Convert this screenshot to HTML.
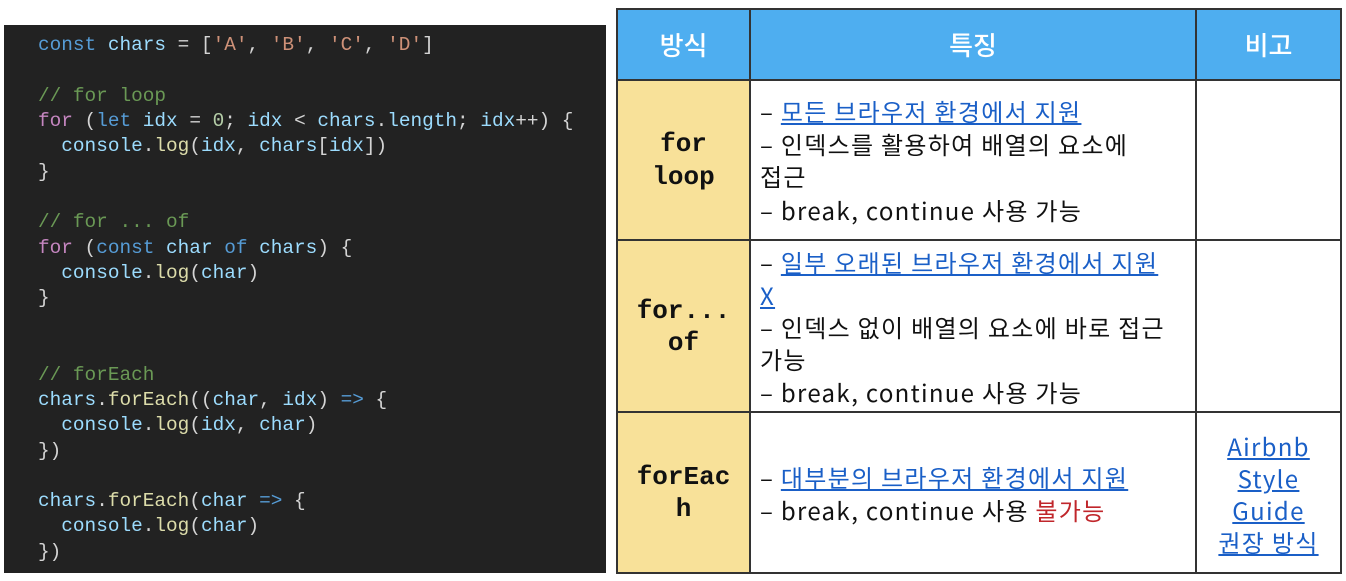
<!DOCTYPE html>
<html><head><meta charset="utf-8"><style>
*{margin:0;padding:0;box-sizing:border-box}
body{width:1346px;height:581px;background:#fff;position:relative;overflow:hidden;font-family:"Liberation Sans","Noto Sans CJK KR",sans-serif}
.code{position:absolute;left:4px;top:25px;width:602px;height:548px;background:#222}
.l{position:absolute;left:38px;font-family:"Liberation Mono",monospace;font-size:19.4px;color:#d4d4d4;white-space:pre;line-height:25px}
.k{color:#569cd6}.v{color:#9cdcfe}.p{color:#c586c0}.c{color:#6a9955}.s{color:#ce9178}.f{color:#dcdcaa}.n{color:#b5cea8}
.cell{position:absolute;border:2px solid #333}
.t{position:absolute;font-size:24px;line-height:33px;color:#111;white-space:nowrap;letter-spacing:1.3px;font-family:"Noto Sans CJK KR","Liberation Sans",sans-serif}
a,.a{color:#1a5fc7;text-decoration:underline}
.m{position:absolute;font-family:"Liberation Mono",monospace;font-weight:bold;font-size:26px;color:#111;text-align:center;width:133px;left:617px;line-height:33px}
.h{position:absolute;color:#fff;font-size:26px;text-align:center;line-height:71px;top:9px;font-family:"Noto Sans CJK KR",sans-serif;font-weight:500}
</style></head><body>
<div class="code">
<div class="l" style="top:8px;left:34px"><span class="k">const</span> <span class="v">chars</span> = [<span class="s">'A'</span>, <span class="s">'B'</span>, <span class="s">'C'</span>, <span class="s">'D'</span>]</div>
<div class="l c" style="top:59px;left:34px">// for loop</div>
<div class="l" style="top:84px;left:34px"><span class="p">for</span> (<span class="k">let</span> <span class="v">idx</span> = <span class="n">0</span>; <span class="v">idx</span> &lt; <span class="v">chars</span>.<span class="v">length</span>; <span class="v">idx</span>++) {</div>
<div class="l" style="top:109px;left:34px">  <span class="v">console</span>.<span class="f">log</span>(<span class="v">idx</span>, <span class="v">chars</span>[<span class="v">idx</span>])</div>
<div class="l" style="top:135px;left:34px">}</div>
<div class="l c" style="top:185px;left:34px">// for ... of</div>
<div class="l" style="top:211px;left:34px"><span class="p">for</span> (<span class="k">const</span> <span class="v">char</span> <span class="k">of</span> <span class="v">chars</span>) {</div>
<div class="l" style="top:236px;left:34px">  <span class="v">console</span>.<span class="f">log</span>(<span class="v">char</span>)</div>
<div class="l" style="top:261px;left:34px">}</div>
<div class="l c" style="top:338px;left:34px">// forEach</div>
<div class="l" style="top:363px;left:34px"><span class="v">chars</span>.<span class="f">forEach</span>((<span class="v">char</span>, <span class="v">idx</span>) <span class="k">=&gt;</span> {</div>
<div class="l" style="top:388px;left:34px">  <span class="v">console</span>.<span class="f">log</span>(<span class="v">idx</span>, <span class="v">char</span>)</div>
<div class="l" style="top:414px;left:34px">})</div>
<div class="l" style="top:464px;left:34px"><span class="v">chars</span>.<span class="f">forEach</span>(<span class="v">char</span> <span class="k">=&gt;</span> {</div>
<div class="l" style="top:489px;left:34px">  <span class="v">console</span>.<span class="f">log</span>(<span class="v">char</span>)</div>
<div class="l" style="top:515px;left:34px">})</div>
</div>

<div style="position:absolute;left:617px;top:9px;width:724px;height:71px;background:#4eaef0"></div>
<div style="position:absolute;left:617px;top:80px;width:133px;height:493px;background:#f8e199"></div>
<div class="cell" style="left:616px;top:8px;width:135px;height:73px"></div>
<div class="cell" style="left:749px;top:8px;width:448px;height:73px"></div>
<div class="cell" style="left:1195px;top:8px;width:147px;height:73px"></div>
<div class="cell" style="left:616px;top:79px;width:135px;height:162px"></div>
<div class="cell" style="left:749px;top:79px;width:448px;height:162px"></div>
<div class="cell" style="left:1195px;top:79px;width:147px;height:162px"></div>
<div class="cell" style="left:616px;top:239px;width:135px;height:174px"></div>
<div class="cell" style="left:749px;top:239px;width:448px;height:174px"></div>
<div class="cell" style="left:1195px;top:239px;width:147px;height:174px"></div>
<div class="cell" style="left:616px;top:411px;width:135px;height:163px"></div>
<div class="cell" style="left:749px;top:411px;width:448px;height:163px"></div>
<div class="cell" style="left:1195px;top:411px;width:147px;height:163px"></div>

<div class="h" style="left:617px;width:133px">방식</div>
<div class="h" style="left:750px;width:446px">특징</div>
<div class="h" style="left:1196px;width:145px">비고</div>

<div class="m" style="top:128px">for</div>
<div class="m" style="top:161px">loop</div>
<div class="m" style="top:295px">for...</div>
<div class="m" style="top:327px">of</div>
<div class="m" style="top:461px">forEac</div>
<div class="m" style="top:493px">h</div>

<div class="t" style="left:760px;top:94px">– <span class="a">모든 브라우저 환경에서 지원</span></div>
<div class="t" style="left:760px;top:127px">– 인덱스를 활용하여 배열의 요소에</div>
<div class="t" style="left:760px;top:159px">접근</div>
<div class="t" style="left:760px;top:193px">– break, continue 사용 가능</div>

<div class="t" style="left:760px;top:245px">– <span class="a">일부 오래된 브라우저 환경에서 지원</span></div>
<div class="t" style="left:760px;top:278px"><span class="a">X</span></div>
<div class="t" style="left:760px;top:310px">– 인덱스 없이 배열의 요소에 바로 접근</div>
<div class="t" style="left:760px;top:342px">가능</div>
<div class="t" style="left:760px;top:375px">– break, continue 사용 가능</div>

<div class="t" style="left:760px;top:460px">– <span class="a">대부분의 브라우저 환경에서 지원</span></div>
<div class="t" style="left:760px;top:493px">– break, continue 사용 <span style="color:#c0262b">불가능</span></div>

<div class="t a" style="left:1196px;width:145px;text-align:center;top:429px">Airbnb</div>
<div class="t a" style="left:1196px;width:145px;text-align:center;top:461px">Style</div>
<div class="t a" style="left:1196px;width:145px;text-align:center;top:493px">Guide</div>
<div class="t a" style="left:1196px;width:145px;text-align:center;top:525px">권장 방식</div>
</body></html>
